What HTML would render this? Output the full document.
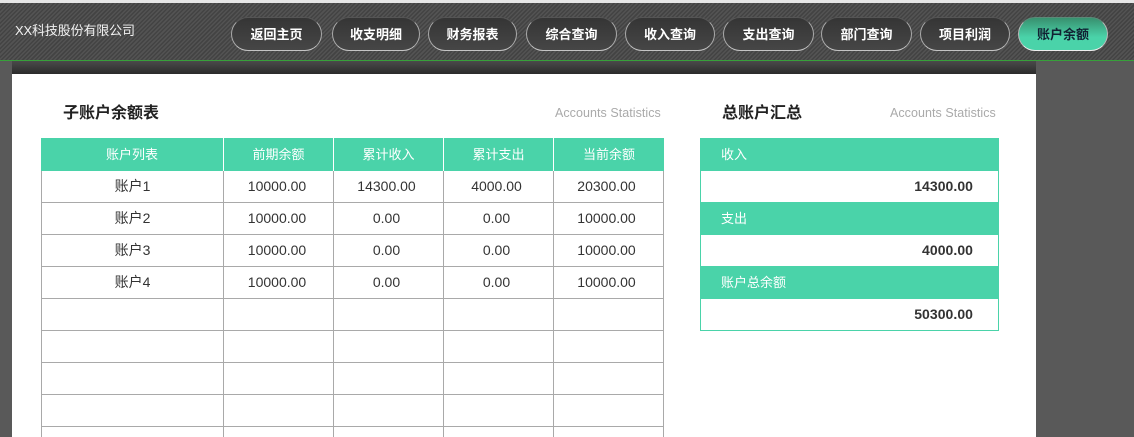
<!DOCTYPE html>
<html lang="zh">
<head>
<meta charset="utf-8">
<style>
html,body{margin:0;padding:0;width:1134px;height:437px;overflow:hidden;background:#595959;font-family:"Liberation Sans","Noto Sans CJK SC",sans-serif;font-size:13px;color:#333}
*{box-sizing:border-box}
.abs,.btn{position:absolute}
#top{left:0;top:0;width:1134px;height:3px;background:#e6e6e6}
#hdr{left:0;top:3px;width:1134px;height:58px;border-bottom:1px solid #37a03a;background-color:#4a4a4a;background-image:repeating-linear-gradient(135deg,#535353 0,#535353 1.5px,#434343 1.5px,#434343 3px)}
#logo{left:15px;top:21px;color:#f2f2f2;font-size:13px;line-height:20px;white-space:nowrap;letter-spacing:-.15px}
.btn{top:17px;height:34px;border-radius:17px;background:linear-gradient(#353535,#464646);border:1.5px solid;border-color:#555 #aaa #c4c4c4 #aaa;color:#fff;font-weight:bold;font-size:13px;line-height:33px;text-align:center;white-space:nowrap}
.btn.on{background:linear-gradient(#38906f,#4ad3a9 60%);color:#123;border-color:#5a8a78 #bbb #eee #bbb}
#shade{left:12px;top:61px;width:1024px;height:13px;background:linear-gradient(#4a4a4a,#2b2b2b)}
#page{left:12px;top:74px;width:1024px;height:363px;background:#fff}
.title{font-size:16px;font-weight:bold;color:#222;line-height:24px;white-space:nowrap}
.sub{font-size:12.5px;color:#aaa;line-height:18px;white-space:nowrap;letter-spacing:.05px}
.hc{background:#4ad3a9;color:#fff;text-align:center;line-height:33px;height:33px;top:138px;white-space:nowrap}
.c{text-align:center;line-height:31px;height:31px;font-size:14px;color:#333;white-space:nowrap}
.hl{background:#a9a9a9;height:1px;left:41px;width:623px}
.vl{background:#a9a9a9;width:1px;top:171px;height:266px}
.sh{left:700px;width:299px;height:33px;background:#4ad3a9;color:#fff;padding-left:21px;line-height:33px}
.sv{left:701px;width:272px;height:31px;text-align:right;font-weight:bold;font-size:14px;line-height:31px;color:#333;letter-spacing:.05px}
</style>
</head>
<body>
<div class="abs" id="top"></div>
<div class="abs" id="hdr"></div>
<div class="abs" id="logo">XX科技股份有限公司</div>
<div class="btn" style="left:231px;width:91px">返回主页</div>
<div class="btn" style="left:332px;width:88px">收支明细</div>
<div class="btn" style="left:428px;width:89px">财务报表</div>
<div class="btn" style="left:526px;width:91px">综合查询</div>
<div class="btn" style="left:625px;width:90px">收入查询</div>
<div class="btn" style="left:723px;width:91px">支出查询</div>
<div class="btn" style="left:821px;width:91px">部门查询</div>
<div class="btn" style="left:920px;width:90px">项目利润</div>
<div class="btn on" style="left:1018px;width:90px">账户余额</div>
<div class="abs" id="shade"></div>
<div class="abs" id="page"></div>

<div class="abs title" style="left:63px;top:102px">子账户余额表</div>
<div class="abs sub" style="left:555px;top:104px">Accounts Statistics</div>
<div class="abs title" style="left:722px;top:102px">总账户汇总</div>
<div class="abs sub" style="left:890px;top:104px">Accounts Statistics</div>

<div class="abs hc" style="left:41px;width:182px">账户列表</div>
<div class="abs hc" style="left:224px;width:109px">前期余额</div>
<div class="abs hc" style="left:334px;width:109px">累计收入</div>
<div class="abs hc" style="left:444px;width:109px">累计支出</div>
<div class="abs hc" style="left:554px;width:110px">当前余额</div>

<div class="abs vl" style="left:41px"></div>
<div class="abs vl" style="left:223px"></div>
<div class="abs vl" style="left:333px"></div>
<div class="abs vl" style="left:443px"></div>
<div class="abs vl" style="left:553px"></div>
<div class="abs vl" style="left:663px"></div>
<div class="abs hl" style="top:202px"></div>
<div class="abs hl" style="top:234px"></div>
<div class="abs hl" style="top:266px"></div>
<div class="abs hl" style="top:298px"></div>
<div class="abs hl" style="top:330px"></div>
<div class="abs hl" style="top:362px"></div>
<div class="abs hl" style="top:394px"></div>
<div class="abs hl" style="top:426px"></div>

<div class="abs c" style="left:42px;width:181px;top:171px">账户1</div>
<div class="abs c" style="left:222px;width:110px;top:171px">10000.00</div>
<div class="abs c" style="left:332px;width:109px;top:171px">14300.00</div>
<div class="abs c" style="left:442px;width:109px;top:171px">4000.00</div>
<div class="abs c" style="left:552px;width:109px;top:171px">20300.00</div>

<div class="abs c" style="left:42px;width:181px;top:203px">账户2</div>
<div class="abs c" style="left:222px;width:110px;top:203px">10000.00</div>
<div class="abs c" style="left:332px;width:109px;top:203px">0.00</div>
<div class="abs c" style="left:442px;width:109px;top:203px">0.00</div>
<div class="abs c" style="left:552px;width:109px;top:203px">10000.00</div>

<div class="abs c" style="left:42px;width:181px;top:235px">账户3</div>
<div class="abs c" style="left:222px;width:110px;top:235px">10000.00</div>
<div class="abs c" style="left:332px;width:109px;top:235px">0.00</div>
<div class="abs c" style="left:442px;width:109px;top:235px">0.00</div>
<div class="abs c" style="left:552px;width:109px;top:235px">10000.00</div>

<div class="abs c" style="left:42px;width:181px;top:267px">账户4</div>
<div class="abs c" style="left:222px;width:110px;top:267px">10000.00</div>
<div class="abs c" style="left:332px;width:109px;top:267px">0.00</div>
<div class="abs c" style="left:442px;width:109px;top:267px">0.00</div>
<div class="abs c" style="left:552px;width:109px;top:267px">10000.00</div>

<div class="abs" style="left:700px;top:138px;width:299px;height:193px;border:1px solid #4ad3a9"></div>
<div class="abs sh" style="top:138px">收入</div>
<div class="abs sv" style="top:171px">14300.00</div>
<div class="abs sh" style="top:202px">支出</div>
<div class="abs sv" style="top:235px">4000.00</div>
<div class="abs sh" style="top:266px">账户总余额</div>
<div class="abs sv" style="top:299px">50300.00</div>
</body>
</html>
